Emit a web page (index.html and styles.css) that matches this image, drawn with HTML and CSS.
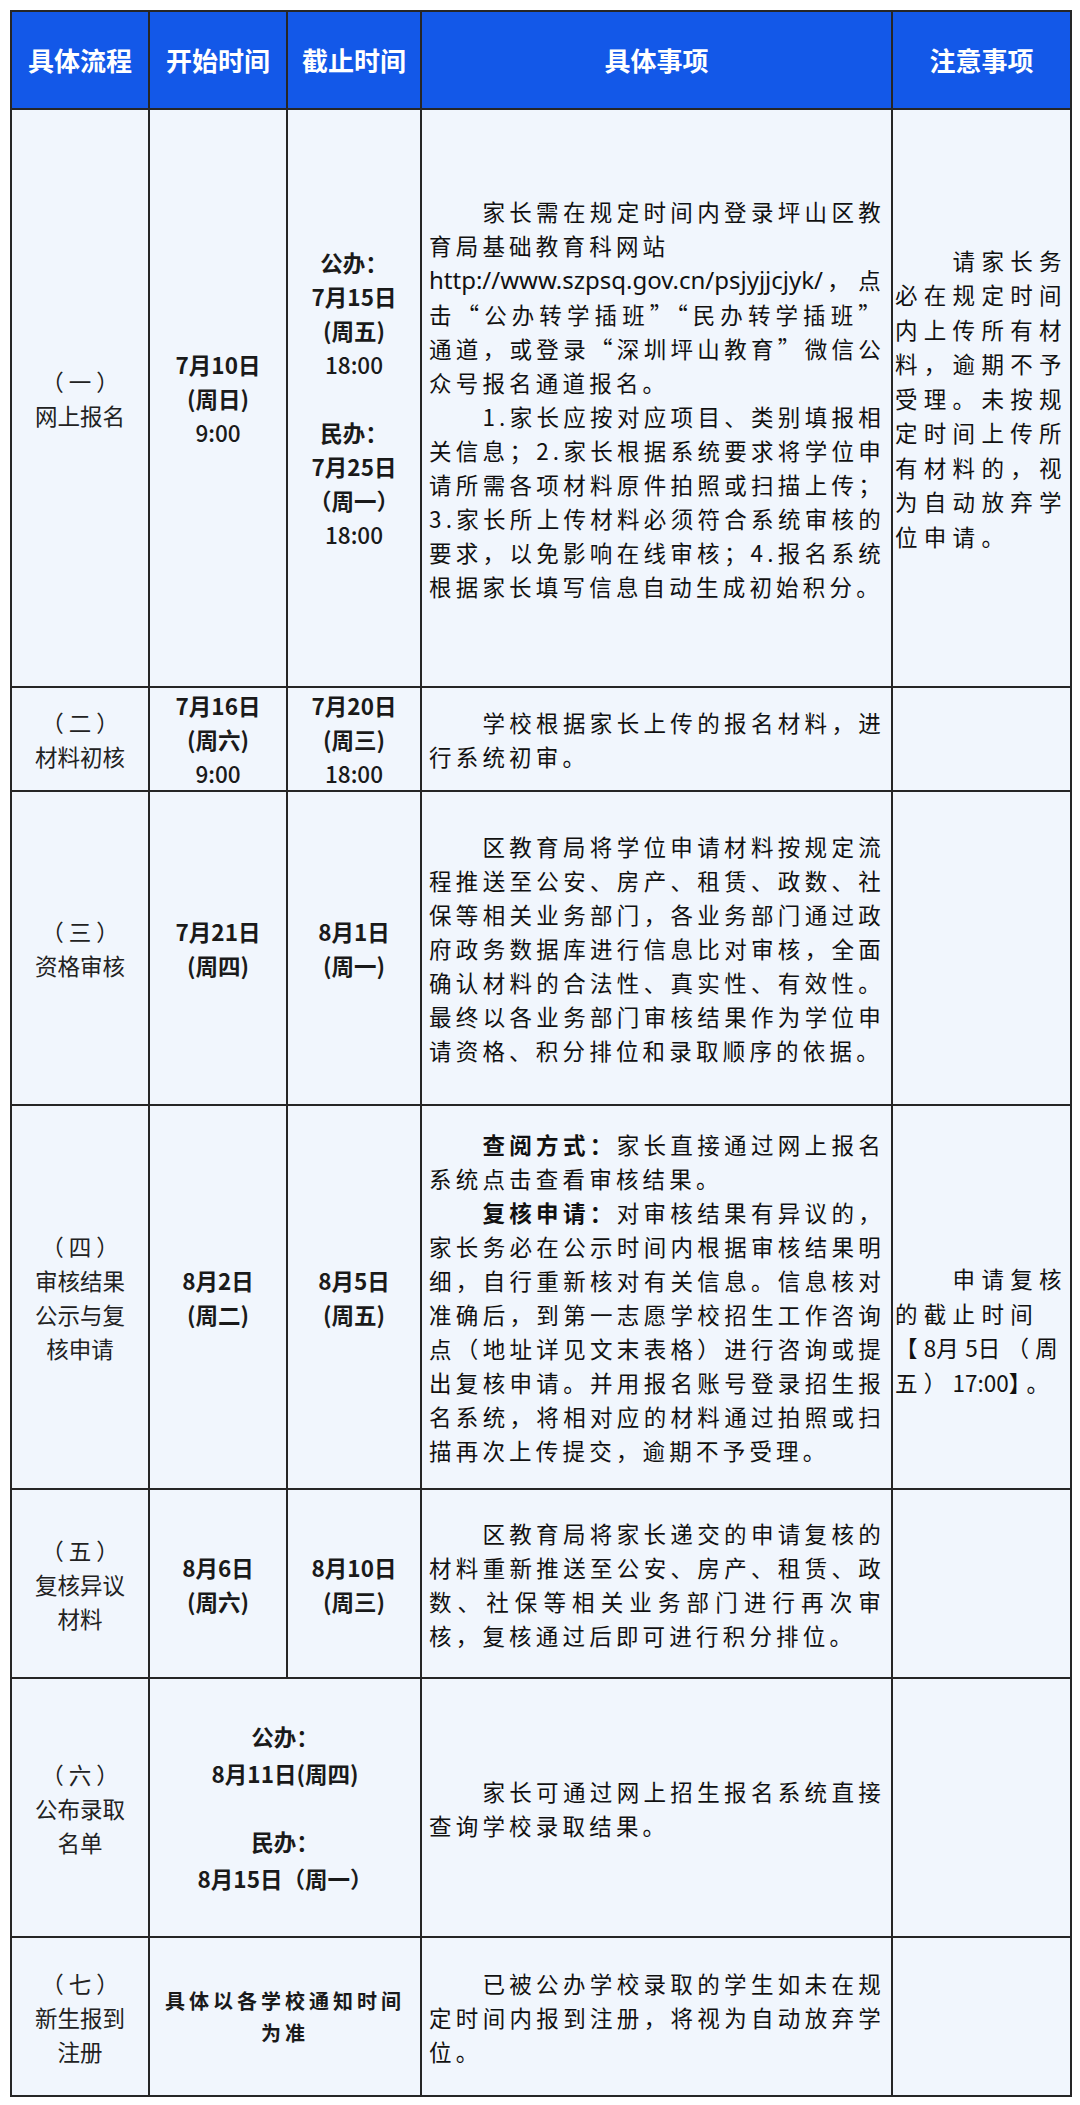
FILE: index.html
```html
<!DOCTYPE html>
<html lang="zh-CN">
<head>
<meta charset="utf-8">
<title>插班流程</title>
<link rel="stylesheet" href="styles.css">
</head>
<body>
<table class="flow">
  <colgroup>
    <col class="c-step">
    <col class="c-start">
    <col class="c-end">
    <col class="c-detail">
    <col class="c-note">
  </colgroup>
  <thead>
    <tr class="r-head">
      <th>具体流程</th>
      <th>开始时间</th>
      <th>截止时间</th>
      <th>具体事项</th>
      <th>注意事项</th>
    </tr>
  </thead>
  <tbody>
    <tr class="r1">
      <td class="step"><div>（ 一 ）</div><div>网上报名</div></td>
      <td class="date"><div>7月10日</div><div>(周日)</div><div class="time">9:00</div></td>
      <td class="date">
        <div>公办：</div><div>7月15日</div><div>(周五)</div><div class="time">18:00</div>
        <div class="gap"></div>
        <div>民办：</div><div>7月25日</div><div>（周一）</div><div class="time">18:00</div>
      </td>
      <td class="detail">
        <p>家长需在规定时间内登录坪山区教育局基础教育科网站<br><span class="url">http://www.szpsq.gov.cn/psjyjjcjyk/</span>，点<wbr>击<span class="q">“</span>公办转学插班<span class="q">”“</span>民办转学插班<span class="q">”</span>通道，或登录<span class="q">“</span>深圳坪山教育<span class="q">”</span>微信公<wbr>众号报名通道报名。</p>
        <p>1.家长应按对应项目、类别填报相关信息；2.家长根据系统要求将学位申请所需各项材料原件拍照或扫描上传；3.家长所上传材料必须符合系统审核的要求，以免影响在线审核；4.报名系统根据家长填写信息自动生成初始积分。</p>
      </td>
      <td class="note"><p>请家长务必在规定时间内上传所有材料，逾期不予受理。未按规定时间上传所有材料的，视为自动放弃学位申请。</p></td>
    </tr>
    <tr class="r2">
      <td class="step"><div>（ 二 ）</div><div>材料初核</div></td>
      <td class="date"><div>7月16日</div><div>(周六)</div><div class="time">9:00</div></td>
      <td class="date"><div>7月20日</div><div>(周三)</div><div class="time">18:00</div></td>
      <td class="detail"><p>学校根据家长上传的报名材料，进行系统初审。</p></td>
      <td class="note"></td>
    </tr>
    <tr class="r3">
      <td class="step"><div>（ 三 ）</div><div>资格审核</div></td>
      <td class="date"><div>7月21日</div><div>(周四)</div></td>
      <td class="date"><div>8月1日</div><div>(周一)</div></td>
      <td class="detail"><p>区教育局将学位申请材料按规定流程推送至公安、房产、租赁、政数、社保等相关业务部门，各业务部门通过政府政务数据库进行信息比对审核，全面确认材料的合法性、真实性、有效性。最终以各业务部门审核结果作为学位申请资格、积分排位和录取顺序的依据。</p></td>
      <td class="note"></td>
    </tr>
    <tr class="r4">
      <td class="step"><div>（ 四 ）</div><div>审核结果公示与复核申请</div></td>
      <td class="date"><div>8月2日</div><div>(周二)</div></td>
      <td class="date"><div>8月5日</div><div>(周五)</div></td>
      <td class="detail">
        <p><strong>查阅方式：</strong>家长直接通过网上报名<wbr>系统点击查看审核结果。</p>
        <p><strong>复核申请：</strong>对审核结果有异议的，<wbr>家长务必在公示时间内根据审核结果明细，自行重新核对有关信息。信息核对准确后，到第一志愿学校招生工作咨询点（地址详见文末表格）进行咨询或提出复核申请。并用报名账号登录招生报名系统，将相对应的材料通过拍照或扫描再次上传提交，逾期不予受理。</p>
      </td>
      <td class="note note-low"><p>申请复核<wbr>的截止时间<wbr>【<span class="num">8</span>月<span class="num">5</span>日（周<wbr>五）<span class="num">17:00</span>】。</p></td>
    </tr>
    <tr class="r5">
      <td class="step"><div>（ 五 ）</div><div>复核异议材料</div></td>
      <td class="date"><div>8月6日</div><div>(周六)</div></td>
      <td class="date"><div>8月10日</div><div>(周三)</div></td>
      <td class="detail"><p>区教育局将家长递交的申请复核的材料重新推送至公安、房产、租赁、政数、社保等相关业务部门进行再次审核，复核通过后即可进行积分排位。</p></td>
      <td class="note"></td>
    </tr>
    <tr class="r6">
      <td class="step"><div>（ 六 ）</div><div>公布录取名单</div></td>
      <td class="date wide" colspan="2">
        <div>公办：</div><div>8月11日(周四)</div>
        <div class="gap"></div>
        <div>民办：</div><div>8月15日（周一）</div>
      </td>
      <td class="detail"><p>家长可通过网上招生报名系统直接查询学校录取结果。</p></td>
      <td class="note"></td>
    </tr>
    <tr class="r7">
      <td class="step"><div>（ 七 ）</div><div>新生报到注册</div></td>
      <td class="mini" colspan="2">具体以各学校通知时间为准</td>
      <td class="detail"><p>已被公办学校录取的学生如未在规定时间内报到注册，将视为自动放弃学位。</p></td>
      <td class="note"></td>
    </tr>
  </tbody>
</table>
</body>
</html>
```

FILE: styles.css
```css
html, body {
  margin: 0;
  background: #ffffff;
}

body {
  padding: 10px 10px 0 10px;
  font-family: "Noto Sans CJK SC", "Noto Sans", sans-serif;
  color: #1a1a1a;
}

.flow {
  border-collapse: collapse;
  table-layout: fixed;
  width: 1060px;
}

.c-step { width: 138px; }
.c-start { width: 138px; }
.c-end { width: 134px; }
.c-detail { width: 471px; }
.c-note { width: 179px; }

.flow th,
.flow td {
  border: 2px solid #262626;
  padding: 0;
  vertical-align: middle;
}

.flow th {
  background: #1358e8;
  color: #ffffff;
  font-size: 26px;
  font-weight: 700;
  line-height: 40px;
  text-align: center;
}

.flow td {
  background: #f1f6fd;
}

.r-head { height: 98px; }
.r1 { height: 578px; }
.r2 { height: 104px; }
.r3 { height: 314px; }
.r4 { height: 384px; }
.r5 { height: 189px; }
.r6 { height: 259px; }
.r7 { height: 159px; }

.flow td.step {
  font-size: 22.5px;
  line-height: 34px;
  text-align: center;
  padding: 0 19px;
  color: #222222;
}

.date {
  font-size: 22.5px;
  font-weight: 700;
  line-height: 34px;
  text-align: center;
  color: #1a1a1a;
}

.date .time {
  font-weight: 500;
}

.date .gap {
  height: 34px;
}

.date.wide {
  line-height: 37.5px;
}

.date.wide .gap {
  height: 30px;
}

.flow td.mini {
  font-size: 20px;
  font-weight: 700;
  letter-spacing: 4px;
  line-height: 32px;
  text-align: center;
  padding: 0 12px;
}

.flow td.detail {
  padding: 0 6px 0 7px;
}

.detail p {
  margin: 0;
  font-size: 22.5px;
  letter-spacing: 4.2px;
  line-height: 34px;
  text-indent: 53.4px;
  text-align: justify;
  color: #111111;
}

.detail strong {
  font-weight: 700;
}

.detail .url {
  font-family: "Noto Sans", sans-serif;
  font-size: 24px;
  letter-spacing: 0;
}

.detail .q {
  font-feature-settings: "fwid" 1;
}

.flow td.note {
  padding: 0 1px 0 2px;
}

.flow td.note-low {
  padding-top: 66px;
}

.note p {
  margin: 0;
  font-size: 22.5px;
  letter-spacing: 6.3px;
  line-height: 34.5px;
  text-indent: 57.6px;
  text-align: left;
  color: #111111;
}

.note .num {
  letter-spacing: 0;
}
```
